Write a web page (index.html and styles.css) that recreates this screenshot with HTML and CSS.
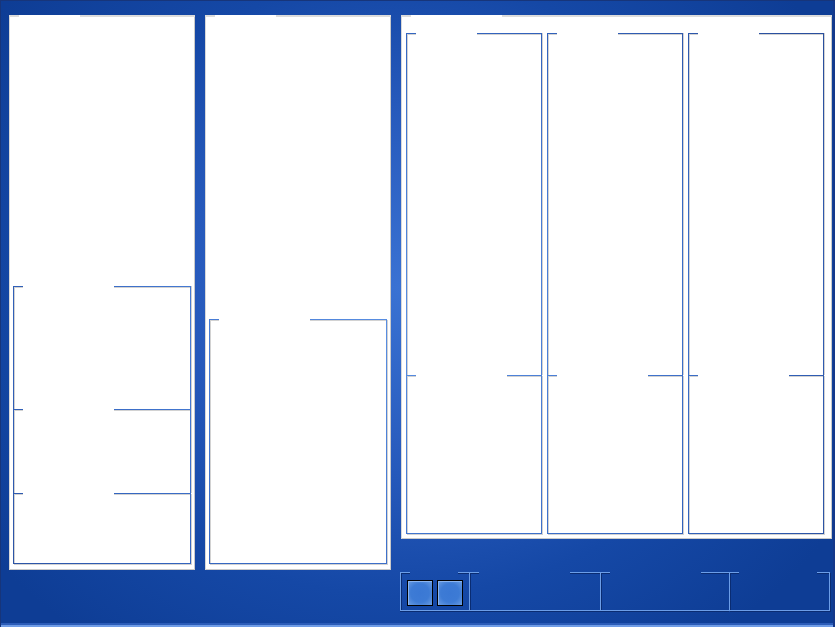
FILE: index.html
```html
<!DOCTYPE html>
<html>
<head>
<meta charset="utf-8">
<link rel="stylesheet" href="styles.css">
</head>
<body>
<div class="screen">
  <div class="panel side">
    <div class="ptop"><i class="lead"></i><span class="gap g61"></span><i class="fill"></i></div>
    <div class="pbody">
      <div class="gb">
        <div class="sec s123"><div class="ttl"><i class="lead"></i><span class="gap g91"></span><i class="fill"></i></div><div class="inner"></div></div>
        <div class="sec s84"><div class="ttl"><i class="lead"></i><span class="gap g91"></span><i class="fill"></i></div><div class="inner"></div></div>
        <div class="sec last s71"><div class="ttl"><i class="lead"></i><span class="gap g91"></span><i class="fill"></i></div><div class="inner"></div></div>
      </div>
    </div>
  </div>
  <div class="panel side">
    <div class="ptop"><i class="lead"></i><span class="gap g61"></span><i class="fill"></i></div>
    <div class="pbody">
      <div class="gb">
        <div class="sec last s245"><div class="ttl"><i class="lead"></i><span class="gap g91"></span><i class="fill"></i></div><div class="inner"></div></div>
      </div>
    </div>
  </div>
  <div class="right">
    <div class="panel main">
      <div class="ptop"><i class="lead"></i><span class="gap g91"></span><i class="fill"></i></div>
      <div class="pbody cols">
        <div class="gb col">
          <div class="sec s342"><div class="ttl"><i class="lead"></i><span class="gap g61"></span><i class="fill"></i></div><div class="inner"></div></div>
          <div class="sec last grow"><div class="ttl"><i class="lead"></i><span class="gap g91"></span><i class="fill"></i></div><div class="inner"></div></div>
        </div>
        <div class="gb col">
          <div class="sec s342"><div class="ttl"><i class="lead"></i><span class="gap g61"></span><i class="fill"></i></div><div class="inner"></div></div>
          <div class="sec last grow"><div class="ttl"><i class="lead"></i><span class="gap g91"></span><i class="fill"></i></div><div class="inner"></div></div>
        </div>
        <div class="gb col">
          <div class="sec s342"><div class="ttl"><i class="lead"></i><span class="gap g61"></span><i class="fill"></i></div><div class="inner"></div></div>
          <div class="sec last grow"><div class="ttl"><i class="lead"></i><span class="gap g91"></span><i class="fill"></i></div><div class="inner"></div></div>
        </div>
      </div>
    </div>
    <div class="bar">
      <div class="bg ga">
        <div class="bttl"><i class="lead"></i><span class="bgap g48"></span><i class="fill"></i></div>
        <div class="btns"><button class="btn"></button><button class="btn"></button></div>
      </div>
      <div class="bg gb2">
        <div class="bttl"><i class="lead"></i><span class="bgap g91"></span><i class="fill"></i></div>
      </div>
      <div class="bg gc">
        <div class="bttl"><i class="lead"></i><span class="bgap g91"></span><i class="fill"></i></div>
      </div>
      <div class="bg gd">
        <div class="bttl"><i class="lead"></i><span class="bgap g78"></span><i class="fill"></i></div>
      </div>
    </div>
  </div>
</div>
</body>
</html>
```
FILE: styles.css
```css
:root {
  --bgrad: radial-gradient(ellipse 62% 70% at 48% 46%, #3a72d3 0%, #2659bb 42%, #1548a6 70%, #0e3d95 100%);
  --lgrad: radial-gradient(ellipse 62% 70% at 48% 52%, #5a8fe2 0%, #4579d2 42%, #3263bd 70%, #2a4f9e 100%);
  --shade: #d2d2d2;
}

html, body {
  margin: 0;
  padding: 0;
  font-family: "Liberation Sans", Arial, sans-serif;
}

.screen {
  width: 835px;
  height: 627px;
  box-sizing: border-box;
  display: flex;
  align-items: flex-start;
  gap: 10px;
  padding: 15px 0 0 9px;
  background: var(--bgrad);
  background-attachment: fixed;
  box-shadow: inset 0 1px 0 #17357a, inset 1px 0 0 #17357a, inset -2px 0 0 #14388a, inset 0 -2px 0 #6f9ce6, inset 0 -4px 0 #2b5cb8;
}

/* main white panels */
.panel {
  background: #fff;
  display: flex;
  flex-direction: column;
  box-sizing: border-box;
  box-shadow: inset 1px 0 0 #d8d8d8, inset -1px 0 0 #c9c9c9, inset 0 -1px 0 #c9c9c9;
}
.side {
  width: 186px;
  height: 555px;
}
.ptop {
  display: flex;
  height: 2px;
  flex: none;
}
.ptop .lead {
  width: 10px;
  background: #dcdcdc;
}
.ptop .fill {
  flex: 1;
  background: #dcdcdc;
}
.pbody {
  flex: 1;
  display: flex;
  flex-direction: column;
  justify-content: flex-end;
  padding: 0 4px 6px 4px;
}

.gap { flex: none; background: #fff; }
.bgap { flex: none; }
.g48 { width: 48px; }
.g61 { width: 61px; }
.g78 { width: 78px; }
.g91 { width: 91px; }

/* titled group boxes: the lines let a blue gradient show through */
.gb {
  display: flex;
  flex-direction: column;
}
.sec {
  display: flex;
  flex-direction: column;
  box-sizing: border-box;
  padding: 0 1px;
  background: var(--lgrad);
  background-attachment: fixed;
  box-shadow: 1px 0 0 var(--shade);
}
.sec.last {
  padding-bottom: 1px;
  box-shadow: 1px 1px 0 var(--shade);
}
.ttl {
  display: flex;
  height: 2px;
  flex: none;
}
.ttl .lead {
  width: 9px;
  background: linear-gradient(to bottom, transparent 1px, var(--shade) 1px);
}
.ttl .fill {
  flex: 1;
  background: linear-gradient(to bottom, transparent 1px, var(--shade) 1px);
}
.inner {
  flex: 1;
  background: #fff;
  box-shadow: inset 1px 0 0 var(--shade);
}
.s123 { height: 123px; }
.s84 { height: 84px; }
.s71 { height: 71px; }
.s245 { height: 245px; }
.s342 { height: 342px; }
.grow { flex: 1; }

/* right side */
.right {
  width: 431px;
  display: flex;
  flex-direction: column;
}
.main {
  height: 524px;
}
.cols {
  flex-direction: row;
  justify-content: flex-start;
  align-items: stretch;
  gap: 5px;
  padding: 16px 0 5px 5px;
}
.col {
  width: 136px;
}

/* bottom bar */
.bar {
  display: flex;
  margin: 33px 0 0 -1px;
  height: 39px;
  width: 431px;
}
.bg {
  --ln: #6c9ee8;
  --sh: #0a2c72;
  box-sizing: border-box;
  display: flex;
  flex-direction: column;
  border-left: 1px solid var(--ln);
  border-bottom: 1px solid var(--ln);
  box-shadow: inset 1px 0 0 var(--sh), 0 1px 0 var(--sh);
}
.bttl {
  display: flex;
  height: 1px;
  flex: none;
}
.bttl .lead {
  width: 9px;
  background: var(--ln);
  box-shadow: 0 1px 0 var(--sh);
}
.bttl .fill {
  flex: 1;
  background: var(--ln);
  box-shadow: 0 1px 0 var(--sh);
}
.ga { width: 69px; }
.gb2 { width: 131px; }
.gc { width: 129px; }
.gd {
  width: 101px;
  border-right: 1px solid var(--ln);
  box-shadow: inset 1px 0 0 var(--sh), 1px 1px 0 var(--sh);
}
.btns {
  display: flex;
  gap: 4px;
  padding: 7px 0 0 6px;
}
.btn {
  width: 26px;
  height: 26px;
  margin: 0;
  padding: 0;
  border: 1px solid #000;
  background:
    radial-gradient(ellipse 70% 70% at 50% 50%, #3a78d4 0%, #3d7bd5 55%, #6a9de2 100%);
  box-shadow: inset 1px 1px 0 #8ab4ee;
}
```
